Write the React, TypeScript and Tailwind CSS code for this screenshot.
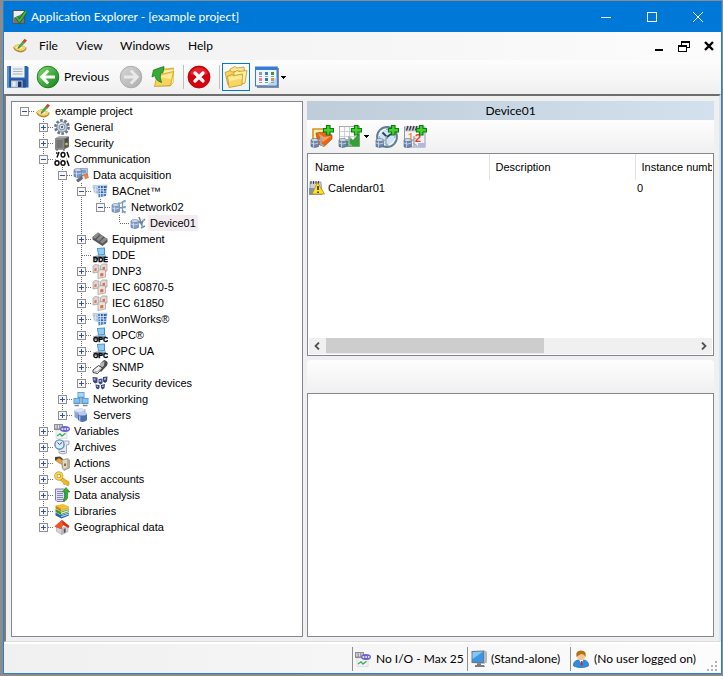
import React, { useState } from 'react';
import type { ReactNode } from 'react';

type SvgProps = { children: ReactNode; size?: string };

function Glyph({ children, size = 'size-4' }: SvgProps) {
  return (
    <svg viewBox="0 0 16 16" className={`${size} shrink-0`} aria-hidden="true">
      {children}
    </svg>
  );
}

function BigGlyph({ children }: SvgProps) {
  return (
    <svg viewBox="0 0 24 24" className="size-6 shrink-0" aria-hidden="true">
      {children}
    </svg>
  );
}

/* ---------- small 16px drawings ---------- */

function ProjectIcon() {
  return (
    <Glyph>
      <path d="M1 9.500Q3 6.500 7 6L14.500 9.500Q15 13 9 14.500Q3 14 1 9.500Z" fill="#b9862a" />
      <path d="M1.500 9.300Q4 6.500 7.500 6L14 9.500Q13 12.500 8.500 13Q4 12.500 1.500 9.300Z" fill="#f2d66f" />
      <path d="M4 9.500Q7 7.500 10.500 9.500Q8 12 4 9.500Z" fill="#fff8d8" />
      <path d="M6 9.500L11 3L13 4.500L7.500 10Z" fill="#4cae3c" stroke="#257a25" strokeWidth=".5" />
      <path d="M10.700 3.200L12.600 .8L15 2.500L13 4.800Z" fill="#e33b22" />
      <path d="M6 9.500L5.700 10.700L7.500 10Z" fill="#333" />
    </Glyph>
  );
}

function GearIcon() {
  return (
    <Glyph>
      <circle cx="8" cy="8" r="6.600" fill="none" stroke="#66758a" strokeWidth="2.600" strokeDasharray="2.600 1.547" />
      <circle cx="8" cy="8" r="5.200" fill="#c3cfdb" stroke="#6d7a8a" strokeWidth=".8" />
      <path d="M4 6Q6 3.500 9 4" stroke="#f5f8fb" strokeWidth="1.200" fill="none" />
      <circle cx="8" cy="8" r="2.800" fill="#e8eef4" stroke="#7a8899" strokeWidth=".9" />
      <circle cx="8" cy="8" r="1.200" fill="#5d6874" />
    </Glyph>
  );
}

function SafeIcon() {
  return (
    <Glyph>
      <path d="M1 3.500L5 1.500H15V12L10 14.500H1Z" fill="#6b6b6b" />
      <path d="M1 3.500L5 1.500H15L10 3.500Z" fill="#a9a9a9" />
      <path d="M1 3.500H10V14.500H1Z" fill="#8a8a8a" />
      <path d="M2.500 5H8.500V13H2.500Z" fill="#757575" />
      <path d="M11 4L14 3V11L11 12.500Z" fill="#4c4c4c" />
      <circle cx="12.500" cy="9" r="1.500" fill="#c6b84c" />
      <path d="M2 14.500h2v1H2zM9 14.500h2v1H9z" fill="#555" />
    </Glyph>
  );
}

function BinaryIcon() {
  return (
    <Glyph>
      <g fill="none" stroke="#111" strokeWidth="1.500">
        <path d="M3 6.500L5 1M2 2h1.500M13 1L15 6.500M13 9.500L15 15" />
        <ellipse cx="9" cy="3.800" rx="1.900" ry="2.300" />
        <ellipse cx="3" cy="12" rx="2" ry="2.300" />
        <ellipse cx="9" cy="12" rx="2" ry="2.300" />
      </g>
      <path d="M1 8h1v1H1zM6 8h1v1H6zM12 7.500h1v1h-1z" fill="#999" />
    </Glyph>
  );
}

function Cylinder({ x, y, fill = '#7f9fca' }: { x: number; y: number; fill?: string }) {
  return (
    <g transform={`translate(${x} ${y})`}>
      <path d="M0 2V8.500Q3.500 10.800 7.500 8.500V2Z" fill={fill} stroke="#5a7396" strokeWidth=".6" />
      <ellipse cx="3.750" cy="2" rx="3.750" ry="1.500" fill="#cfdcee" stroke="#5a7396" strokeWidth=".6" />
      <path d="M0 5Q3.500 7 7.500 5M2.500 3.500V9.500" fill="none" stroke="#dce8f8" strokeWidth=".7" />
    </g>
  );
}

function AcquisitionIcon() {
  return (
    <Glyph>
      <path d="M7 1.500H14.500V9H7Z" fill="#b8c6da" stroke="#61728c" strokeWidth=".5" />
      <path d="M8.500 3h4.500v3H8.500z" fill="#7f9dc9" />
      <Cylinder x={1} y={1} fill="#6f94cf" />
      <path d="M3 13L10 8L12 10.500L5 15.500Z" fill="#6a6a72" />
      <path d="M10 8L14 6.500L15.500 10.500L12 12Z" fill="#f0824e" stroke="#c05a36" strokeWidth=".5" />
      <path d="M9 9.500l2-.8 1.200 3-2 .8z" fill="#dedee4" />
    </Glyph>
  );
}

function GridNetIcon() {
  return (
    <Glyph>
      <path d="M.5 2L15.500 1.500V4L.5 5Z" fill="#c3d0de" />
      <path d="M1 4L6 4.500V11L2 9.500Z" fill="#a9c2e2" />
      <path d="M6 3H15L14 13L6.500 14.500Z" fill="#4f7fc6" />
      <path d="M6 5.500h9M6 8h9M6 10.500h8M8.500 3v12M11.300 3v11M1 7h5M3.500 4v7" stroke="#dbe8f8" strokeWidth=".8" />
      <path d="M9 4h1.500M12 6.800h1.500M9.200 9.300h1.500M12 4h1.500" stroke="#24509c" strokeWidth="1.500" />
    </Glyph>
  );
}

function NetworkNodeIcon() {
  return (
    <Glyph>
      <Cylinder x={1} y={4} />
      <path d="M11.500 2V14M8 5L14 2M8 9L14 8M11 11L14 13.500" stroke="#8495a6" strokeWidth="1.300" />
      <path d="M12.500 1h2.200v2.200h-2.200zM12.500 7h2.200v2.200h-2.200zM12.500 12h2.200v2.200h-2.200zM7 3.500h2v2H7z" fill="#57b1ec" />
    </Glyph>
  );
}

function DeviceIcon() {
  return (
    <Glyph>
      <Cylinder x={1} y={4} />
      <path d="M9 2L13 13M15 4L10 9M9 7L13 8M11 13L15 11" stroke="#75828f" strokeWidth="1.500" />
      <path d="M12 5l1.500-.8 1 1.800-1.500.8zM11.500 10.500h2v2h-2z" fill="#6db8e6" />
    </Glyph>
  );
}

function EquipmentIcon() {
  return (
    <Glyph>
      <path d="M0.500 6L6 1.500L15.500 8V11L10.500 15L.5 8.500Z" fill="#585858" />
      <path d="M.5 6L6 1.500L8 3L3.200 7.700ZM4.500 8.500L9 3.800L11.500 5.500L7 10.200ZM8 11L12.500 6.300L15.500 8L10.500 12.500Z" fill="#8c8c8c" />
    </Glyph>
  );
}

function PcTag({ tag }: { tag: string }) {
  return (
    <Glyph>
      <path d="M5 1L13 .5V8L6 8.500Z" fill="#4a90cc" />
      <path d="M6 1.800L12 1.400V7L6.800 7.400Z" fill="#90cbf6" />
      <path d="M1 9.500L5 8.500H14V11L3 13Z" fill="#7f96ab" />
      <text
        x="8.500"
        y="15"
        textAnchor="middle"
        fontSize="7"
        fontWeight="700"
        fontFamily="Liberation Sans, sans-serif"
        fill="#000"
        stroke="#000"
        strokeWidth=".4"
      >
        {tag}
      </text>
    </Glyph>
  );
}

function BoxesIcon() {
  return (
    <Glyph>
      <g stroke="#958d89" strokeWidth=".6">
        <path d="M1 3L3 1.500L7 2V9L1 10Z" fill="#dcd7d4" />
        <path d="M8.500 2.500L10.500 1L15 1V8L8.500 9Z" fill="#e0dbd8" />
        <path d="M6 8L8 6.500L13.500 7V14L6 15.500Z" fill="#e8e2de" />
      </g>
      <path d="M2.500 5.500l2-.4v2.600l-2 .4zM10.500 4.200l2.500-.4v2.600l-2.500.4zM8.300 10.300l3-.4v3l-3 .5z" fill="#df6f44" />
    </Glyph>
  );
}

function PlugIcon() {
  return (
    <Glyph>
      <path d="M9 4L12 1Q17 2 15 6.500L9 13L6 10Z" fill="#4c4c4c" />
      <path d="M8 5L12.500 2L12 6.500L8 10.500Z" fill="#b5b5b5" />
      <path d="M1 11L6.500 6.500L10.500 9L5.500 14.500L1 13.500Z" fill="#f2f2f2" stroke="#3c3c3c" strokeWidth="1" />
      <path d="M2.500 12L5 12.800L8.500 9.500" fill="none" stroke="#999" strokeWidth=".8" />
    </Glyph>
  );
}

function ShieldGridIcon() {
  return (
    <Glyph>
      <path d="M.5 2L5.500 2.500V7.500L3 8.500L1 6.500ZM6.500 4L10.500 3.500V8L8.500 9.500L6.500 8ZM11 2L15.500 1.500L15 6.500L13 8L11 6.500ZM3.500 9.500L7.500 10V13L6 14.500L4 13ZM9 10L13 9L12.500 13L10.500 14.500L9 13Z" fill="#3a4580" />
      <path d="M1.500 3.200l2 .3v2l-1.800-.3zM7.400 5l1.800-.2v2L7.500 7zM12 3l2-.3-.2 2-1.700.3zM4.600 10.700l1.500.1v1.300H4.800zM10 10.800l1.800-.3-.3 1.500H10z" fill="#aab6ea" />
    </Glyph>
  );
}

function NetworkingIcon() {
  return (
    <Glyph>
      <path d="M4.500 1H11.500V7H4.500Z" fill="#4f9ad8" />
      <path d="M5.300 1.800h5.400v4H5.300z" fill="#a9d6f8" />
      <path d="M.5 7H7V13H.5ZM9 7H15.500V13H9Z" fill="#4f9ad8" />
      <path d="M1.300 7.800h4.900v4H1.300zM9.800 7.800h4.900v4H9.800z" fill="#86c2f0" />
      <path d="M1.500 14.500h4.500M10 14.500h4.500M8 7v6" stroke="#7d8b99" strokeWidth="1.300" />
    </Glyph>
  );
}

function ServersIcon() {
  return (
    <Glyph>
      <path d="M1.500 3.500V10Q3 12 7 12V3.500Z" fill="#8ea4cf" />
      <path d="M1.500 3.500Q6 0 12.500 2.500V6H1.500Z" fill="#9db2da" />
      <ellipse cx="6.500" cy="3.300" rx="5" ry="1.800" fill="#dbe5f5" />
      <path d="M5 6.500V13Q9.500 16.800 14 13V6.500Z" fill="#4c70b4" />
      <ellipse cx="9.500" cy="6.500" rx="4.500" ry="2" fill="#b9cbea" />
      <path d="M6.700 8.500v5.500" stroke="#a3b9e2" strokeWidth="1.300" />
    </Glyph>
  );
}

function VariablesIcon() {
  return (
    <Glyph>
      <path d="M2 7H13V15.500H2Z" fill="#f2f2f6" stroke="#cfcfd9" strokeWidth=".6" />
      <path d="M0 1H9V7H0Z" fill="#8e8e93" />
      <path d="M1.200 2h1.400v3.500H1.200zM3.800 2h1.400v3.500H3.800zM6.400 2h1.400v3.500H6.400z" fill="#dfdfdf" />
      <path d="M6 6Q6 3 10.500 3Q16 3 16 6Q16 9 11 9Q6 9 6 6Z" fill="#6a63d2" />
      <path d="M7.500 6h1.800M10.300 6h1.800M13 6h1.500" stroke="#fff" strokeWidth="1.300" />
      <path d="M3 13L6 10.800L8 13L11.500 10.300" fill="none" stroke="#3bb24a" strokeWidth="1.300" />
    </Glyph>
  );
}

function ArchivesIcon() {
  return (
    <Glyph>
      <path d="M9 2H15V5.500L12.500 6V14Q9 16 5 14V9Z" fill="#e3e8f0" stroke="#8d9ab0" strokeWidth=".8" />
      <circle cx="5.500" cy="5.500" r="4.600" fill="#d8eefa" stroke="#5f88ae" strokeWidth="1.300" />
      <path d="M5.500 5.500L3.500 3.500M5.500 5.500L8 3.500" stroke="#2f5475" strokeWidth="1" />
      <path d="M6.500 12.500h4.500" stroke="#7c89a0" />
    </Glyph>
  );
}

function ActionsIcon() {
  return (
    <Glyph>
      <path d="M1 2L6 1.500L9 4L7.500 7L4 6.500L1 5Z" fill="#454238" />
      <path d="M1.500 5.500L5 3L11 7L9 10L5 8Z" fill="#eda838" stroke="#9f6a13" strokeWidth=".5" />
      <path d="M8 5L13.500 3.500L15.500 5V13L10 15.500L8 13Z" fill="#b5afa2" stroke="#8f8877" strokeWidth=".6" />
      <path d="M8.500 5.500L13 4.500V12.500L9.500 14Z" fill="#dfd9cc" />
      <path d="M10 8.500h2v2.500h-2z" fill="#a2622a" />
    </Glyph>
  );
}

function KeyIcon() {
  return (
    <Glyph>
      <path d="M7 6L15 11V13.500L13.500 15L11.500 13L10 13.500L9 11.300L5.500 8.500Z" fill="#f3b81f" stroke="#b57d0c" strokeWidth=".6" />
      <circle cx="4.800" cy="5" r="3" fill="none" stroke="#b57d0c" strokeWidth="3" />
      <circle cx="4.800" cy="5" r="3" fill="none" stroke="#fbd048" strokeWidth="2" />
    </Glyph>
  );
}

function AnalysisIcon() {
  return (
    <Glyph>
      <path d="M1.500 2H10.500V14.500H3L1.500 13Z" fill="#dfe1f3" stroke="#6c70a8" strokeWidth=".9" />
      <path d="M3 4.500h6M3 6.500h6M3 8.500h6M3 10.500h6M3 12.500h6" stroke="#7a7eb4" strokeWidth=".9" />
      <path d="M12 .5L15.800 5H13.700V10Q13.500 13.500 9.500 14V12Q11 11 11 9.500V5H8.500Z" fill="#2fb236" stroke="#1a7a20" strokeWidth=".6" />
    </Glyph>
  );
}

function LibrariesIcon() {
  return (
    <Glyph>
      <path d="M1.500 2.500L9 1L15 3.500L7 5.500Z" fill="#f3c02c" />
      <path d="M1.500 2.500V5.500L7 8.500V5.500Z" fill="#c58a12" />
      <path d="M7 5.500L15 3.500V6L7 8.500Z" fill="#e9b93a" />
      <path d="M1.500 6L7 8.800L15 6.300V9L7 12L1.500 9Z" fill="#3f9a2e" />
      <path d="M7 9.600L15 7V8.300L7 11Z" fill="#d8efcf" />
      <path d="M1.500 9.500L7 12.300L15 9.700V12.500L7.500 15.500L1.500 12.500Z" fill="#2a62b6" />
      <path d="M7.200 13L15 10.500V11.600L7.200 14.300Z" fill="#b9d4f4" />
    </Glyph>
  );
}

function HouseIcon() {
  return (
    <Glyph>
      <path d="M2.500 8L8 9V15.500L2.500 12.500ZM8 9L14 7.500V12.500L8 15.500Z" fill="#d4d4d8" stroke="#97979f" strokeWidth=".5" />
      <path d="M.5 7.500L8 1L15.500 7L14.500 9L9 6L7 10Z" fill="#d92f14" />
      <path d="M.5 7.500L8 1L9 5.500L7 10Z" fill="#f2552c" />
      <path d="M9.700 9.800l2-.6v4l-2 1z" fill="#55555d" />
    </Glyph>
  );
}

function CalendarWarnIcon() {
  return (
    <Glyph>
      <path d="M1 2H12L13 14.500H1Z" fill="#cfd0da" stroke="#88889a" strokeWidth=".7" />
      <path d="M2 1v3M4.500 1v3M7 1v3M9.500 1v3" stroke="#444" />
      <path d="M0 8h5v7H0z" fill="#7f93b3" />
      <path d="M8.500 2.500L15.500 14H3Z" fill="#fde12e" stroke="#b28c00" strokeWidth=".8" />
      <path d="M9 6v4M9 11.500v1.500" stroke="#222" strokeWidth="1.500" />
    </Glyph>
  );
}

function MonitorIcon() {
  return (
    <svg viewBox="0 0 16 18" className="h-[18px] w-4 shrink-0" aria-hidden="true">
      <path d="M.5 1L13 .5L15.500 2V12.500L13 13.500L.5 13Z" fill="#6f7780" />
      <path d="M13 .5L15.500 2V12.500L13 13.500Z" fill="#b3b9c0" />
      <path d="M1.500 2L12.200 1.600V12.200L1.500 11.800Z" fill="#3d97e0" />
      <path d="M1.500 2L12.200 1.600L1.500 9Z" fill="#85c6f4" />
      <path d="M6 13.300h4V15H6zM4 15h9l1 2H4z" fill="#777d84" />
    </svg>
  );
}

function UserIcon() {
  return (
    <svg viewBox="0 0 16 18" className="h-[18px] w-4 shrink-0" aria-hidden="true">
      <path d="M.5 16Q0 11 5 10L11 10Q16 11 15.500 16Q8 19.500 .5 16Z" fill="#2e8fe0" stroke="#1861ab" strokeWidth=".6" />
      <path d="M6 9.500h4.500L8.500 14Z" fill="#fff" />
      <path d="M8 11h1.300l.6 4.500h-2.400z" fill="#d52b2b" />
      <circle cx="8" cy="6" r="4" fill="#f7c78c" />
      <path d="M3.500 7Q2 .5 8 .5Q14 .5 12.500 7Q11 3.500 8 4Q5 5.500 3.500 7Z" fill="#b96d14" />
    </svg>
  );
}

/* ---------- tool bar drawings ---------- */

function SaveIcon() {
  return (
    <BigGlyph>
      <path d="M1 1H21L22.500 2.500V22.500H1Z" fill="#2b62b4" />
      <path d="M1 1H3V22.500H1Z" fill="#5a92dc" />
      <path d="M5 1H18.500V12.500H5Z" fill="#eef1f5" />
      <path d="M7 4h9.500M7 6.500h9.500M7 9h9.500" stroke="#a9b0b8" />
      <path d="M3.500 14.500H20V22.500H3.500Z" fill="#23508f" />
      <path d="M5 15.500H16.500V22.500H5Z" fill="#b9c4d2" />
      <path d="M12 16.500H15.500V22H12Z" fill="#16386e" />
      <path d="M6.500 16.500h3v5h-3z" fill="#e8ecf0" />
    </BigGlyph>
  );
}

function ArrowCircle({ id, light, dark, rim, flip }: { id: string; light: string; dark: string; rim: string; flip?: boolean }) {
  return (
    <BigGlyph>
      <defs>
        <linearGradient id={id} x1="0" y1="0" x2="1" y2="1">
          <stop offset="0" stopColor={light} />
          <stop offset="1" stopColor={dark} />
        </linearGradient>
      </defs>
      <circle cx="12" cy="12" r="10.800" fill={`url(#${id})`} stroke={rim} strokeWidth=".9" />
      <path
        transform={flip ? 'translate(24 0) scale(-1 1)' : undefined}
        d="M19 12H6.500M12.200 5.500L5.800 12L12.200 18.500"
        fill="none"
        stroke={flip ? '#e9e9e9' : '#fff'}
        strokeWidth="3"
      />
    </BigGlyph>
  );
}

function FolderUpIcon() {
  return (
    <BigGlyph>
      <path d="M7 3.500L12 2.500L14 4L22.500 3V17L19 21H6Z" fill="#e9c144" stroke="#c69620" strokeWidth=".6" />
      <path d="M8 6L22.500 4.500V17L19 20H7Z" fill="#fff2a6" />
      <path d="M3.500 21.500L6 10L22.800 6.500L19.500 20.500Z" fill="#f6d35c" stroke="#c69620" strokeWidth=".7" />
      <path d="M6 12L21.500 8L20 14Z" fill="#fdeb9a" />
      <path d="M13 1.500L2.500 5L1 12L4 10.500Q4 15 10.500 17.500Q8.500 12.500 9.500 8.500L12 7.500Z" fill="#37ab3a" stroke="#1c7a24" strokeWidth=".8" />
    </BigGlyph>
  );
}

function StopIcon() {
  return (
    <BigGlyph>
      <circle cx="12" cy="12" r="11" fill="#d8000c" stroke="#a30008" strokeWidth=".8" />
      <path d="M3 9Q5 3 12 2.500Q19 3 21 9Q12 12 3 9Z" fill="#f24850" opacity=".5" />
      <path d="M8 8L16 16M16 8L8 16" stroke="#fff" strokeWidth="3.300" strokeLinecap="round" />
    </BigGlyph>
  );
}

function FoldersIcon() {
  return (
    <BigGlyph>
      <g stroke="#bb8c1f" strokeWidth=".7">
        <path d="M6 4L11 1.500L13 3L20 2L21 14L8 18Z" fill="#fbe790" />
        <path d="M1 7.500L6 5.500L8 7L16 6L17 17L4 20Z" fill="#f6d460" />
        <path d="M10 7.500L13 5.500L15 6.500L23 5.500L21 18L9 21.500Z" fill="#fff0a0" />
        <path d="M5 22.500L3.500 11L8 9.500L10 10.500L18.500 9L18 20Z" fill="#f7d762" />
      </g>
      <path d="M4.500 12L18 10.500V14Q10 14 5 17Z" fill="#fdeb9a" />
    </BigGlyph>
  );
}

function ViewsIcon() {
  return (
    <BigGlyph>
      <path d="M2 3H24V23H2Z" fill="#8e8e8e" />
      <path d="M0 1.500H22.800V21.500H0Z" fill="#3b7cd3" />
      <path d="M1 5H21.500V20.300H1Z" fill="#eef6ff" />
      <path d="M12 20.300L21.500 12V20.300Z" fill="#b5d9fa" />
      <path d="M4 7h3v3H4z" fill="#9a92d0" />
      <path d="M10 7h3v3h-3z" fill="#4479e2" />
      <path d="M16 7h3v3h-3z" fill="#3a9a3a" />
      <path d="M4 13h3v3H4z" fill="#f98080" />
      <path d="M10 13h3v3h-3z" fill="#3c74a6" />
      <path d="M16 13h3v3h-3z" fill="#cf9a3a" />
      <path d="M4 11.500h3M10 11.500h3M16 11.500h3M4 17.500h3M10 17.500h3M16 17.500h3" stroke="#999" />
    </BigGlyph>
  );
}

/* Green plus and small device that every "add" button carries. */
function AddMarks() {
  return (
    <>
      <path d="M1 15V21.500Q4.500 23.500 8.500 21.500V15Z" fill="#6f86a8" stroke="#47607f" strokeWidth=".6" />
      <ellipse cx="4.750" cy="15" rx="3.750" ry="1.500" fill="#d3deec" stroke="#47607f" strokeWidth=".6" />
      <path d="M1 18Q4.500 20 8.500 18M3.500 16.500V22.500" stroke="#d0deef" strokeWidth=".8" fill="none" />
      <path d="M11 11V21M8.500 16L13 13M10 18L14 21" stroke="#a3adb7" strokeWidth="1.500" />
      <path d="M16.500 .5H20V3.500H23.500V7H20V10H16.500V7H13.500V3.500H16.500Z" fill="#45d12c" stroke="#0d7d12" strokeWidth="1.200" />
    </>
  );
}

function AddFolderIcon() {
  return (
    <BigGlyph>
      <path d="M3 4H14V15H3Z" fill="#fff0b0" stroke="#d29425" strokeWidth="1.600" />
      <path d="M6 8L14 7L22 10V14L14 21.500L8 19Z" fill="#ea6418" stroke="#a94a0c" strokeWidth=".7" />
      <path d="M8 8L14 12L21 11L13 17Z" fill="#fb9d58" />
      <AddMarks />
    </BigGlyph>
  );
}

function AddTrendIcon() {
  return (
    <BigGlyph>
      <rect x="1.500" y="1.500" width="20" height="20" fill="#fafafa" stroke="#999" strokeWidth=".8" />
      <path d="M1.500 6.500h20M1.500 11.500h20M1.500 16.500h20M6.500 1.500v20M11.500 1.500v20M16.500 1.500v20" stroke="#c2c6c9" strokeWidth=".8" />
      <path d="M7 17L12 12L15 15L21.500 8V21.500H9Z" fill="#34a136" />
      <AddMarks />
    </BigGlyph>
  );
}

function AddScheduleIcon() {
  return (
    <BigGlyph>
      <circle cx="12" cy="12" r="10" fill="#cde6f5" stroke="#5f7d98" strokeWidth="1.800" />
      <circle cx="12" cy="12" r="8" fill="none" stroke="#fff" />
      <path d="M7.500 7.500L12 12L16 9" fill="none" stroke="#27435e" strokeWidth="1.800" />
      <path d="M12 3.500v1.500M12 19v1.500M3.500 12H5M19 12h1.500" stroke="#5f7d98" />
      <AddMarks />
    </BigGlyph>
  );
}

function AddCalendarIcon() {
  return (
    <BigGlyph>
      <rect x="1.500" y="2" width="20.500" height="20" fill="#f3f3fb" stroke="#8c8cb4" strokeWidth=".9" />
      <path d="M2 2h20v4.500H2z" fill="#c9c9d6" />
      <path d="M3.500 5.500L5 1M6.500 5.500L8 1M9.500 5.500L11 1M12.500 5.500L14 1" stroke="#3c3c3c" strokeWidth="1.300" />
      <text x="5" y="16" fontSize="10" fontWeight="700" fontFamily="Liberation Sans, sans-serif" fill="#f7941d">
        1
      </text>
      <text x="12" y="16.500" fontSize="11" fontWeight="700" fontFamily="Liberation Sans, sans-serif" fill="#ee3a14">
        2
      </text>
      <path d="M15 18h7v4h-7z" fill="#b3b7e0" />
      <AddMarks />
    </BigGlyph>
  );
}

function Caret() {
  return (
    <svg viewBox="0 0 5 3" className="h-[3px] w-[5px] shrink-0" shapeRendering="crispEdges" aria-hidden="true">
      <path d="M0 0h5v1H4v1H3v1H2V2H1V1H0z" fill="#000" />
    </svg>
  );
}

/* ---------- tree ---------- */

type Node = { label: string; icon: ReactNode; leaf?: boolean; children?: Node[] };

const tree: Node = {
  label: 'example project',
  icon: <ProjectIcon />,
  children: [
    { label: 'General', icon: <GearIcon /> },
    { label: 'Security', icon: <SafeIcon /> },
    {
      label: 'Communication',
      icon: <BinaryIcon />,
      children: [
        {
          label: 'Data acquisition',
          icon: <AcquisitionIcon />,
          children: [
            {
              label: 'BACnet™',
              icon: <GridNetIcon />,
              children: [
                {
                  label: 'Network02',
                  icon: <NetworkNodeIcon />,
                  children: [{ label: 'Device01', icon: <DeviceIcon />, leaf: true }],
                },
              ],
            },
            { label: 'Equipment', icon: <EquipmentIcon /> },
            { label: 'DDE', icon: <PcTag tag="DDE" />, leaf: true },
            { label: 'DNP3', icon: <BoxesIcon /> },
            { label: 'IEC 60870-5', icon: <BoxesIcon /> },
            { label: 'IEC 61850', icon: <BoxesIcon /> },
            { label: 'LonWorks®', icon: <GridNetIcon /> },
            { label: 'OPC®', icon: <PcTag tag="OPC" /> },
            { label: 'OPC UA', icon: <PcTag tag="OPC" /> },
            { label: 'SNMP', icon: <PlugIcon /> },
            { label: 'Security devices', icon: <ShieldGridIcon /> },
          ],
        },
        { label: 'Networking', icon: <NetworkingIcon /> },
        { label: 'Servers', icon: <ServersIcon /> },
      ],
    },
    { label: 'Variables', icon: <VariablesIcon /> },
    { label: 'Archives', icon: <ArchivesIcon /> },
    { label: 'Actions', icon: <ActionsIcon /> },
    { label: 'User accounts', icon: <KeyIcon /> },
    { label: 'Data analysis', icon: <AnalysisIcon /> },
    { label: 'Libraries', icon: <LibrariesIcon /> },
    { label: 'Geographical data', icon: <HouseIcon /> },
  ],
};

function Guide({ lines, box, open }: { lines: string; box?: boolean; open?: boolean }) {
  return (
    <svg viewBox="0 0 19 16" className="block h-4 w-[19px] shrink-0" shapeRendering="crispEdges" aria-hidden="true">
      <path d={lines} stroke="#6e6e6e" strokeDasharray="1 1" fill="none" />
      {box && (
        <>
          <rect x="5.500" y="4.500" width="8" height="8" fill="#f8f8f8" stroke="#919191" />
          <path d={open ? 'M7 8.500h5' : 'M7 8.500h5M9.500 6v5'} stroke="#3c50a0" />
        </>
      )}
    </svg>
  );
}

function Branch({ node, trail, last, root }: { node: Node; trail: boolean[]; last: boolean; root?: boolean }) {
  const [open, setOpen] = useState(Boolean(node.children));
  const own = `${root ? '' : last ? 'M9.500 0V8' : 'M9.500 0V16'}M10 8.500H19`;
  const selected = node.label === 'Device01';
  return (
    <li role="treeitem" aria-expanded={node.leaf ? undefined : open} aria-selected={selected}>
      <div className="flex h-4 items-center">
        {trail.map((line, i) => (
          <Guide key={i} lines={line ? 'M9.500 0V16' : ''} />
        ))}
        {node.leaf ? (
          <Guide lines={own} />
        ) : (
          <button type="button" aria-label={`Toggle ${node.label}`} onClick={() => setOpen(!open)}>
            <Guide lines={own} box open={open} />
          </button>
        )}
        <span className="ml-px flex">{node.icon}</span>
        <span className={`ml-0.5 px-0.5 leading-4 whitespace-nowrap ${selected ? 'bg-[#f3ecf1]' : ''}`}>{node.label}</span>
      </div>
      {open && node.children && (
        <ul role="group">
          {node.children.map((child, i) => (
            <Branch
              key={child.label}
              node={child}
              trail={root ? [false] : [...trail, !last]}
              last={i === node.children!.length - 1}
            />
          ))}
        </ul>
      )}
    </li>
  );
}

/* ---------- window parts ---------- */

function TitleBar() {
  return (
    <header className="flex h-[31px] shrink-0 items-center bg-[#0078d7] pl-2 text-white">
      <Glyph>
        <path d="M1 1.500H12.500V14.500H1Z" fill="#e9eef2" stroke="#4a545c" strokeWidth="1.200" />
        <path d="M1.500 9L8 6L12 3V14H1.500Z" fill="#6b757d" />
        <path d="M4.500 8L7.500 12L14 2.500" fill="none" stroke="#17701c" strokeWidth="3.400" />
        <path d="M4.500 8L7.500 12L14 2.500" fill="none" stroke="#48b53c" strokeWidth="1.800" />
      </Glyph>
      <h1 className="ml-[3px] flex-1 whitespace-nowrap">Application Explorer - [example project]</h1>
      <button type="button" aria-label="Minimize" className="flex h-full w-[46px] items-center justify-center">
        <svg viewBox="0 0 10 10" className="size-2.5" shapeRendering="crispEdges">
          <path d="M0 5.500h10" stroke="#fff" />
        </svg>
      </button>
      <button type="button" aria-label="Maximize" className="flex h-full w-[46px] items-center justify-center">
        <svg viewBox="0 0 10 10" className="size-2.5" shapeRendering="crispEdges">
          <path d="M.5 .5h9v9h-9z" stroke="#fff" fill="none" />
        </svg>
      </button>
      <button type="button" aria-label="Close" className="flex h-full w-[46px] items-center justify-center">
        <svg viewBox="0 0 10 10" className="size-2.5">
          <path d="M0 0l10 10M10 0L0 10" stroke="#fff" />
        </svg>
      </button>
    </header>
  );
}

function MenuBar() {
  return (
    <nav className="flex h-7 shrink-0 items-center bg-linear-to-r from-[#f0f0f0] to-[#fcfcfc] pr-[7px] pl-2">
      <ProjectIcon />
      <div className="ml-[11px] flex flex-1">
        <button type="button" className="w-[37px] text-left">File</button>
        <button type="button" className="w-11 text-left">View</button>
        <button type="button" className="w-[68px] text-left">Windows</button>
        <button type="button" className="text-left">Help</button>
      </div>
      <div className="flex items-center gap-[14px]">
        <button type="button" aria-label="Minimize project">
          <svg viewBox="0 0 10 10" className="size-2.5" shapeRendering="crispEdges">
            <path d="M1 8h8v2H1z" fill="#000" />
          </svg>
        </button>
        <button type="button" aria-label="Restore project">
          <svg viewBox="0 0 12 11" className="h-[11px] w-3" shapeRendering="crispEdges">
            <path d="M3.500 3.500V.5h8v6H9M3 1.500h9" stroke="#000" fill="none" />
            <path d="M.5 4.500h8v6h-8zM0 5.500h9" stroke="#000" fill="#fff" />
          </svg>
        </button>
        <button type="button" aria-label="Close project">
          <svg viewBox="0 0 10 10" className="size-2.5">
            <path d="M1 1l8 8M9 1L1 9" stroke="#000" strokeWidth="2.400" />
          </svg>
        </button>
      </div>
    </nav>
  );
}

function ToolBar() {
  return (
    <div
      role="toolbar"
      aria-label="Main"
      className="flex h-[34px] shrink-0 items-center bg-linear-to-b from-[#fdfdfd] via-[#f7f7f7] to-[#efefef] pl-0.5"
    >
      <button type="button" aria-label="Save"><SaveIcon /></button>
      <button type="button" className="ml-1.5 flex items-center gap-1">
        <ArrowCircle id="back" light="#7fdc6a" dark="#11821a" rim="#17761c" />
        <span className="w-[45px] text-left">Previous</span>
      </button>
      <button type="button" aria-label="Next" className="ml-2.5">
        <ArrowCircle id="next" light="#d6d6d6" dark="#adadad" rim="#a8a8a8" flip />
      </button>
      <button type="button" aria-label="Up one folder" className="ml-2"><FolderUpIcon /></button>
      <div className="ml-2 h-6 w-px bg-[#c0c0c0]" />
      <button type="button" aria-label="Stop" className="ml-[3px]"><StopIcon /></button>
      <div className="ml-2 h-6 w-px bg-[#c0c0c0]" />
      <button type="button" aria-label="Show tree" aria-pressed="true" className="ml-0.5 flex h-7 w-7 items-center justify-center border border-[#0078d7]">
        <FoldersIcon />
      </button>
      <button type="button" aria-label="Views" className="ml-[5px] flex items-center gap-0.5">
        <ViewsIcon />
        <Caret />
      </button>
    </div>
  );
}

const columns = ['Name', 'Description', 'Instance number'];

function DeviceList() {
  return (
    <div className="flex h-[203px] shrink-0 flex-col border border-[#828790] bg-white px-px pb-px">
      <div className="flex-1 overflow-hidden">
        <table className="w-[447px] table-fixed text-left font-['Liberation_Sans',Arial,sans-serif] text-[11px]">
          <colgroup>
            <col className="w-[180px]" />
            <col className="w-[146px]" />
            <col />
          </colgroup>
          <thead>
            <tr className="h-[26px]">
              {columns.map((name) => (
                <th key={name} className="border-r border-[#e2e2e2] pl-1.5 font-normal whitespace-nowrap">{name}</th>
              ))}
            </tr>
          </thead>
          <tbody>
            <tr className="h-4">
              <td>
                <span className="flex items-center gap-[3px]"><CalendarWarnIcon />Calendar01</span>
              </td>
              <td />
              <td className="pl-0.5">0</td>
            </tr>
          </tbody>
        </table>
      </div>
      <div className="flex h-4 items-stretch bg-[#f0f0f0]">
        <button type="button" aria-label="Scroll left" className="flex w-4 items-center justify-center">
          <svg viewBox="0 0 6 8" className="h-2 w-1.5"><path d="M5 .5L1.500 4L5 7.500" fill="none" stroke="#505050" strokeWidth="1.800" /></svg>
        </button>
        <div className="flex-1 pl-px">
          <div className="h-[15px] w-[59%] bg-[#cdcdcd]" />
        </div>
        <button type="button" aria-label="Scroll right" className="flex w-4 items-center justify-center">
          <svg viewBox="0 0 6 8" className="h-2 w-1.5"><path d="M1 .5L4.500 4L1 7.500" fill="none" stroke="#505050" strokeWidth="1.800" /></svg>
        </button>
      </div>
    </div>
  );
}

function DevicePane() {
  return (
    <section className="flex min-w-0 flex-1 flex-col">
      <h2 className="h-[19px] shrink-0 bg-linear-to-r from-[#bfcddb] to-[#d3e1ee] text-center leading-[19px]">Device01</h2>
      <div role="toolbar" aria-label="Device" className="flex h-[33px] shrink-0 items-center bg-linear-to-b from-[#fdfdfd] via-[#f7f7f7] to-[#f0f0f0] pl-[3px]">
        <button type="button" aria-label="Add folder"><AddFolderIcon /></button>
        <button type="button" aria-label="Add trend" className="ml-1 flex items-center gap-0.5">
          <AddTrendIcon />
          <Caret />
        </button>
        <button type="button" aria-label="Add schedule" className="ml-1.5"><AddScheduleIcon /></button>
        <button type="button" aria-label="Add calendar" className="ml-1"><AddCalendarIcon /></button>
      </div>
      <DeviceList />
      <div className="mt-1 h-[33px] shrink-0 rounded-t-sm bg-linear-to-b from-[#fdfdfd] via-[#f7f7f7] to-[#efefef]" />
      <div className="flex-1 border border-[#828790] bg-white" />
    </section>
  );
}

function StatusBar() {
  return (
    <footer className="flex h-[31px] shrink-0 items-center justify-end border-t-2 border-white bg-linear-to-r from-[#f0f0f0] to-[#fcfcfc] pr-0.5 whitespace-nowrap">
      <div className="flex h-6 w-[115px] items-center gap-[5px] border-l border-[#8f8f8f] pl-0.5"><VariablesIcon />No I/O - Max 25</div>
      <div className="flex h-6 w-[103px] items-center gap-1 border-l border-[#8f8f8f] pl-[3px]"><MonitorIcon />(Stand-alone)</div>
      <div className="flex h-6 w-[137px] items-center gap-[5px] border-l border-[#8f8f8f] pl-0.5"><UserIcon />(No user logged on)</div>
      <svg viewBox="0 0 12 12" className="size-3 self-end" shapeRendering="crispEdges" aria-hidden="true">
        <path d="M8 0h2v2H8zM4 4h2v2H4zM8 4h2v2H8zM0 8h2v2H0zM4 8h2v2H4zM8 8h2v2H8z" fill="#b4b4b4" />
      </svg>
    </footer>
  );
}

export default function App() {
  return (
    <div className="h-screen bg-[#8c8c8c] pt-px pr-px pb-0.5 pl-[3px] font-[Lato,'Open_Sans',sans-serif] text-xs text-black">
      <div className="flex h-full flex-col border border-t-0 border-[#2a80c4]">
        <TitleBar />
        <MenuBar />
        <ToolBar />
        <main className="flex min-h-0 flex-1 gap-1 border-t-2 border-r-2 border-b border-l-2 border-t-[#6d6d6d] border-r-[#e3e3e3] border-b-[#dcdcdc] border-l-[#7d7d7d] bg-[#f0f0f0] pt-[5px] pr-[5px] pb-1 pl-[5px]">
          <div className="w-[292px] shrink-0 overflow-auto border border-[#828790] bg-white pt-px pl-[3px] font-['Liberation_Sans',Arial,sans-serif] text-[11px]">
            <ul role="tree" aria-label="Project">
              <Branch node={tree} trail={[]} last root />
            </ul>
          </div>
          <DevicePane />
        </main>
        <StatusBar />
      </div>
    </div>
  );
}
